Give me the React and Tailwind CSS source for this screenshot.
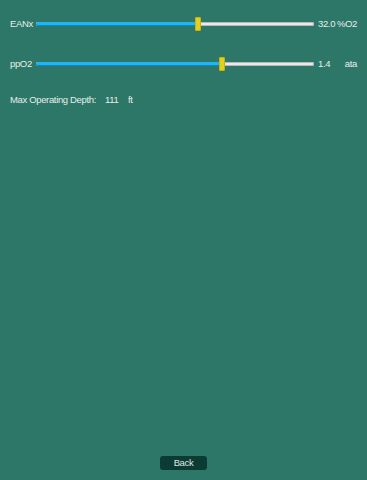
import React from "react";

function Slider({ pct }) {
    return (
        <div className="relative flex-1 h-[4px] rounded-full bg-[#e8e8e8] shadow-[inset_0_0_0_1px_#b9b9b9]">
            <div className="h-full rounded-full bg-[#1fb4f2] shadow-[inset_0_-1px_0_#0f86c4]" style={{ width: `${pct}%` }} />
            {/* thumb */}
            <div className="absolute top-[-7px] flex flex-col items-center" style={{ left: `calc(${pct}% - 3px)` }}>
                <div className="w-[1px] h-[2px] bg-[#6b6b4a]" />
                <div className="w-[6px] h-[14px] rounded-[2px] bg-[#e3cf1d] shadow-[inset_0_0_0_1px_#c8b10f]" />
            </div>
        </div>
    );
}

function Row({ label, pct, value, unit }) {
    return (
        <div className="flex items-center h-[16px]">
            <span className="w-[26px]">{label}</span>
            <Slider pct={pct} />
            <span className="w-[43px] flex justify-between pl-[4px]">
                <span>{value}</span>
                <span>{unit}</span>
            </span>
        </div>
    );
}

export default function App() {
    return (
        <div
            className="h-[480px] w-full bg-[#2d7768] text-[#e6eeeb] text-[9.5px] tracking-[-0.35px] flex flex-col px-[10px]"
            style={{ fontFamily: '"Liberation Sans", Arial, sans-serif' }}
        >
            <div className="mt-[16px] flex flex-col gap-[24px]">
                <Row label="EANx" pct={58.3} value="32.0" unit="%O2" />
                <Row label="ppO2" pct={66.8} value="1.4" unit="ata" />
            </div>
            <div className="mt-[21px] flex leading-[14px]">
                <span className="w-[95px]">Max Operating Depth:</span>
                <span className="w-[23px]">111</span>
                <span>ft</span>
            </div>
            <div className="mt-auto mb-[10px] flex justify-center">
                <button className="w-[47px] h-[14px] rounded-[3px] bg-[#0c3b34] text-[#dfe6e4] text-[9.5px] leading-none">
                    Back
                </button>
            </div>
        </div>
    );
}
